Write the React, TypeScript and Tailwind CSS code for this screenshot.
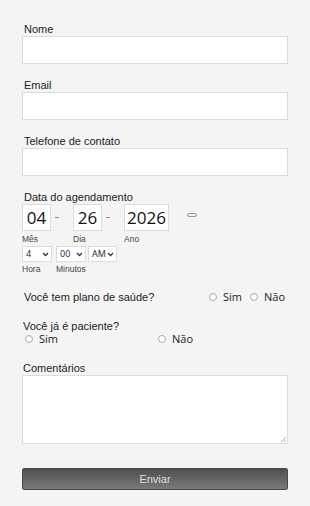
import React from 'react';

const label = "block h-[14px] pl-[2px] text-[11px] leading-[14px] text-[#222] font-['Liberation_Sans',Arial,sans-serif]";
const input = 'block w-full h-[28px] bg-white border border-[#dcdcdc]';
const sub = 'text-[8.5px] leading-[10px] text-[#444]';

function Radio({ text }: { text: string }) {
  return (
    <span className="flex items-center">
      <span className="w-[8px] h-[8px] rounded-full border border-[#a9a9a9] bg-white" />
      <span className="ml-[6px] text-[11px] text-[#222] font-['Open_Sans',sans-serif]">{text}</span>
    </span>
  );
}

function Select({ value, w }: { value: string; w: string }) {
  return (
    <div className={`${w} h-[16px] bg-white border border-[#dcdcdc] flex items-center justify-between pl-[3px] pr-[2px]`}>
      <span className="text-[9px] text-[#222] font-['Open_Sans',sans-serif]">{value}</span>
      <svg width="7" height="5" viewBox="0 0 7 5" fill="none">
        <path d="M1 1l2.5 2.5L6 1" stroke="#333" strokeWidth="1.3" />
      </svg>
    </div>
  );
}

function DateBox({ value, w }: { value: string; w: string }) {
  return (
    <div className={`${w} h-[27px] bg-white border border-[#dcdcdc] flex items-center justify-center text-[17px] text-[#111] font-['Open_Sans',sans-serif]`}>
      {value}
    </div>
  );
}

export default function App() {
  return (
    <div className="min-h-screen w-[310px] bg-[#f4f4f4] px-[22px] pt-[22px] font-['Liberation_Sans',Arial,sans-serif]">
      {/* Nome */}
      <label className={label}>Nome</label>
      <div className={input} />

      <label className={`${label} mt-[14px]`}>Email</label>
      <div className={input} />

      <label className={`${label} mt-[14px]`}>Telefone de contato</label>
      <div className={input} />

      {/* Data */}
      <label className={`${label} mt-[14px]`}>Data do agendamento</label>
      <div className="flex items-start">
        <div className="flex flex-col">
          <DateBox value="04" w="w-[29px]" />
          <span className={`mt-[3px] ${sub}`}>Mês</span>
        </div>
        <div className="w-[22px] h-[27px] flex items-center pl-[4px]">
          <span className="w-[4px] h-px bg-[#888]" />
        </div>
        <div className="flex flex-col">
          <DateBox value="26" w="w-[29px]" />
          <span className={`mt-[3px] ${sub}`}>Dia</span>
        </div>
        <div className="w-[22px] h-[27px] flex items-center pl-[4px]">
          <span className="w-[4px] h-px bg-[#888]" />
        </div>
        <div className="flex flex-col">
          <DateBox value="2026" w="w-[45px]" />
          <span className={`mt-[3px] ${sub}`}>Ano</span>
        </div>
        <span className="ml-[18px] mt-[9px] w-[10px] h-[4px] rounded-full border border-[#999] bg-[#eee]" />
      </div>

      <div className="flex mt-[2px]">
        <div className="flex flex-col">
          <Select value="4" w="w-[30px]" />
          <span className={`mt-[2px] ${sub}`}>Hora</span>
        </div>
        <div className="flex flex-col ml-[4px]">
          <Select value="00" w="w-[30px]" />
          <span className={`mt-[2px] ${sub}`}>Minutos</span>
        </div>
        <div className="flex flex-col ml-[2px]">
          <Select value="AM" w="w-[29px]" />
        </div>
      </div>

      {/* Plano de saude */}
      <div className="mt-[17px] h-[12px] flex items-center">
        <span className="ml-[2px] text-[11px] text-[#222]">Você tem plano de saúde?</span>
        <span className="ml-auto mr-[3px] flex items-center gap-[8px]">
          <Radio text="Sim" />
          <Radio text="Não" />
        </span>
      </div>

      {/* Paciente */}
      <div className="mt-[17px] h-[12px] pl-px text-[11px] leading-[12px] text-[#222]">Você já é paciente?</div>
      <div className="h-[14px] flex items-center pl-[3px]">
        <div className="w-[133px]">
          <Radio text="Sim" />
        </div>
        <Radio text="Não" />
      </div>

      {/* Comentarios */}
      <label className={`${label} mt-[15px] h-[12px] leading-[12px] pl-px`}>Comentários</label>
      <div className="relative w-full h-[69px] bg-white border border-[#dcdcdc]">
        <svg className="absolute right-[1px] bottom-[1px]" width="6" height="6" viewBox="0 0 6 6">
          <path d="M6 1L1 6M6 3.5L3.5 6" stroke="#999" strokeWidth="0.8" />
        </svg>
      </div>

      <button className="mt-[24px] w-full h-[22px] rounded-[2px] border border-[#4a4a4a] bg-gradient-to-b from-[#4f4f4f] to-[#7a7a7a] text-[11px] text-[#dedede] font-['Liberation_Sans',Arial,sans-serif]">
        Enviar
      </button>
    </div>
  );
}
